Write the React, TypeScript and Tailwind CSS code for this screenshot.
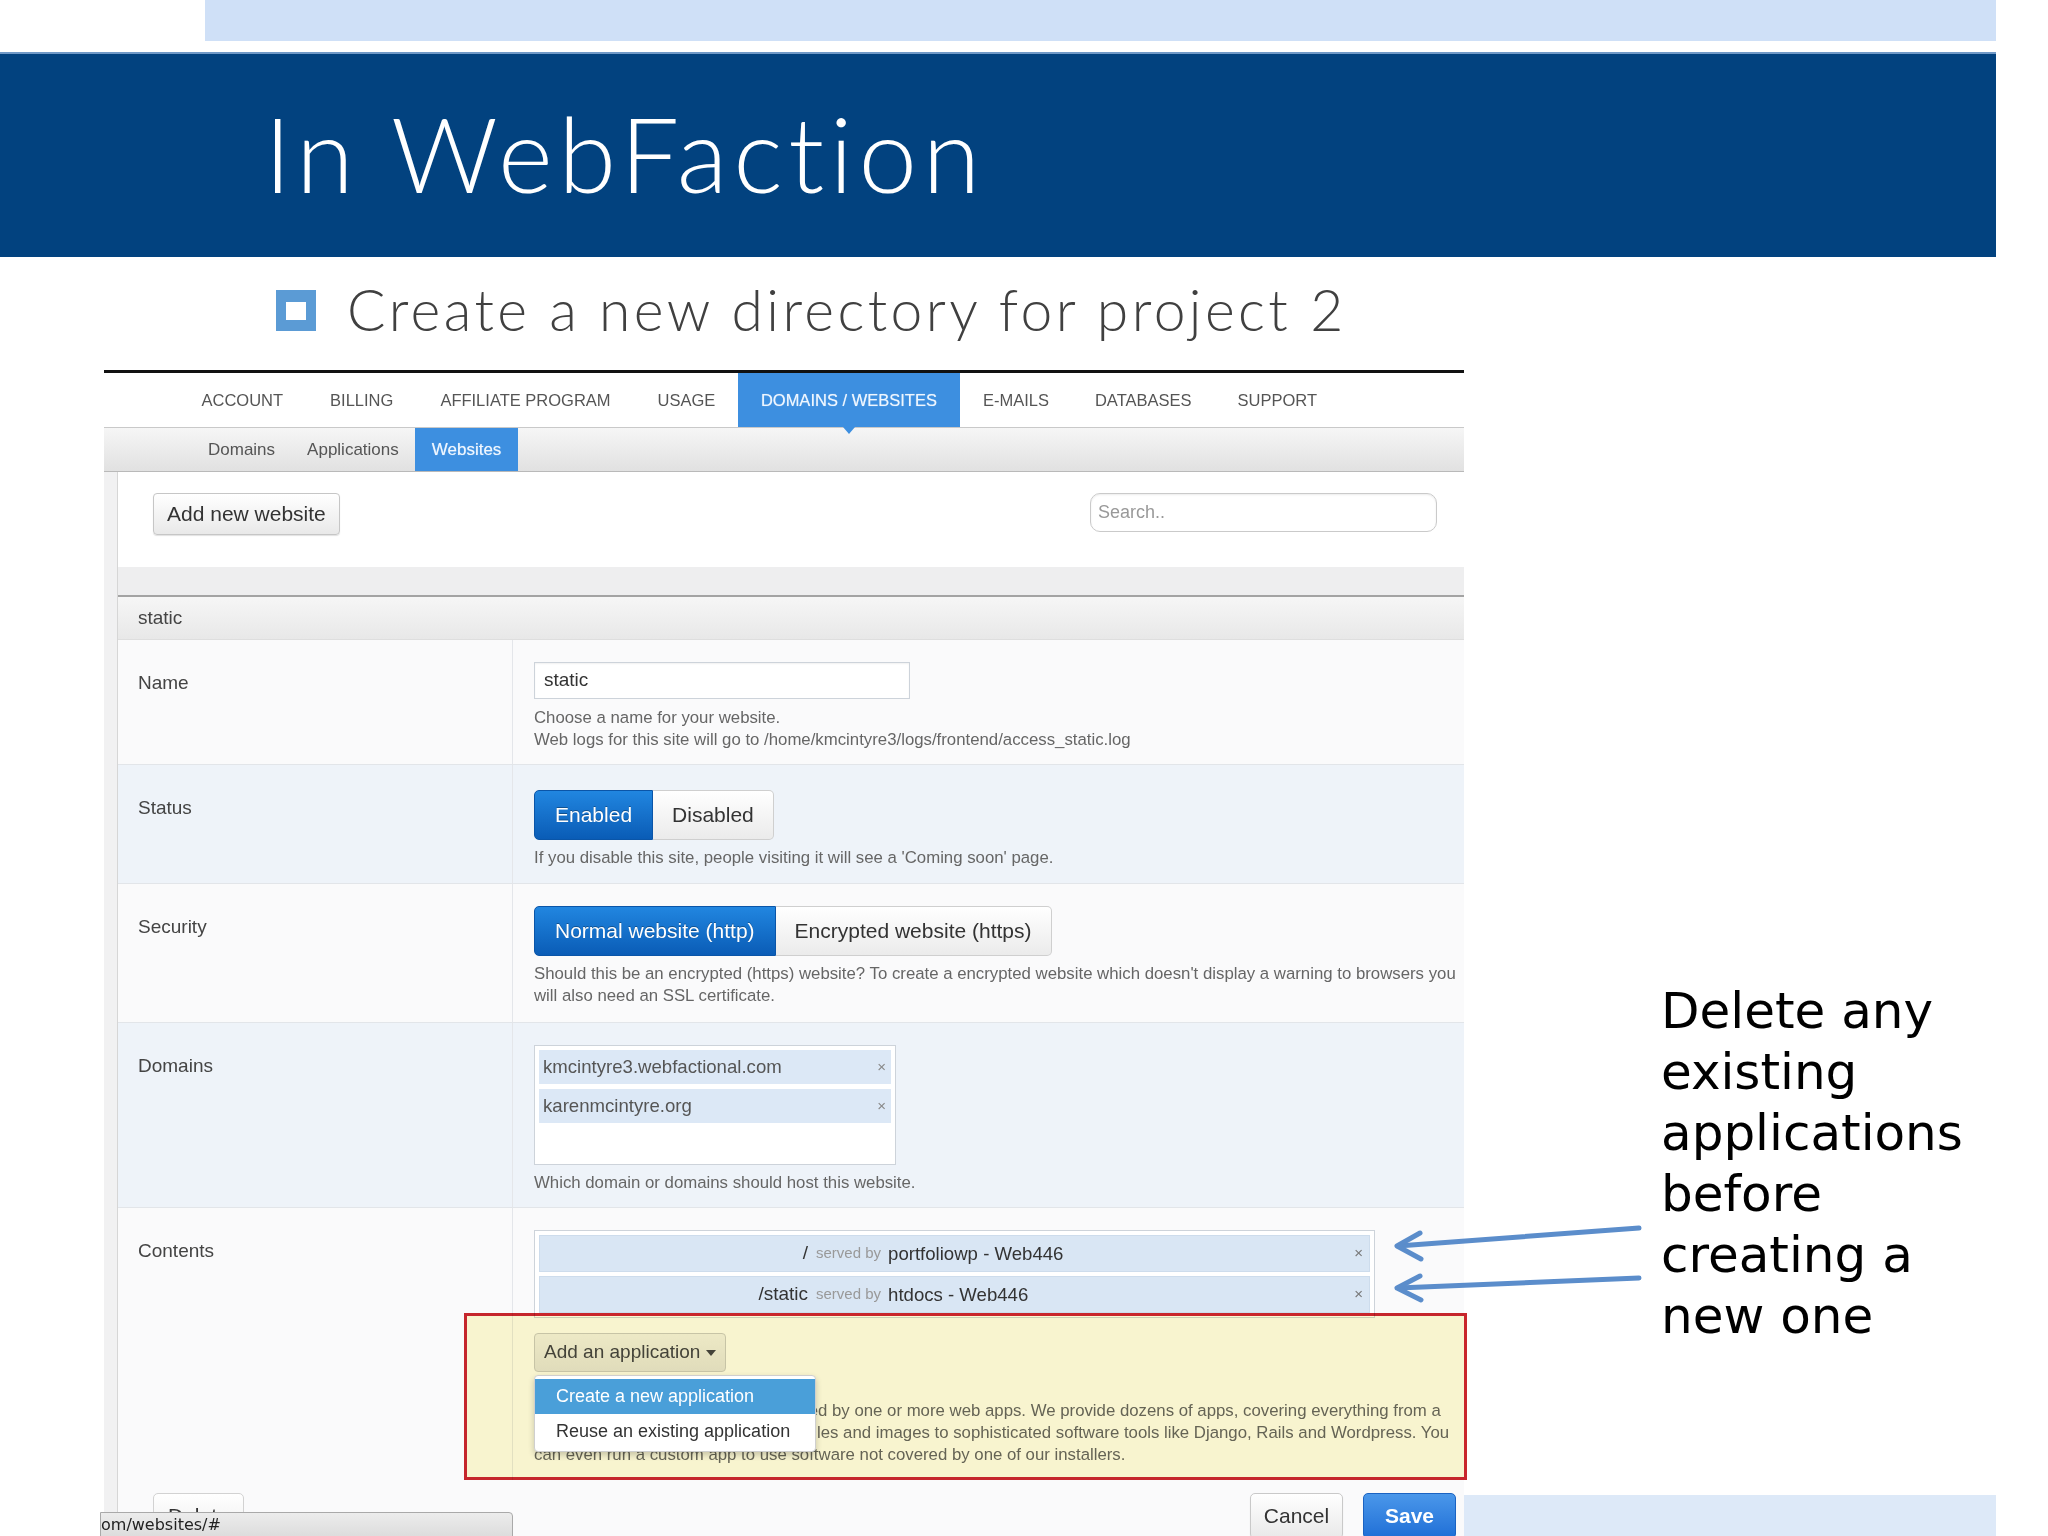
import React from "react"

const help = "text-[16.8px] leading-[22px] text-[#666] whitespace-nowrap"

function Row({ label, className, children }: { label: string; className: string; children: React.ReactNode }) {
  return (
    <div className={`flex border-b border-[#e2e5e9] ${className}`}>
      <div className="w-[395px] shrink-0 border-r border-[#e4e6ea] pl-[20px] pt-[32px] text-[19px] leading-[22px] text-[#444]">{label}</div>
      <div className="relative flex-1 pl-[21px] pt-[22px]">{children}</div>
    </div>
  )
}

function Toggle({ on, off }: { on: string; off: string }) {
  return (
    <div className="flex h-[50px] text-[21px]">
      <div className="flex items-center rounded-l-[5px] border border-[#0a55a8] bg-gradient-to-b from-[#2186e0] to-[#0a5cb6] px-[20px] text-white [text-shadow:0_-1px_0_rgba(0,0,0,0.3)]">
        {on}
      </div>
      <div className="flex items-center rounded-r-[5px] border border-l-0 border-[#cfcfcf] bg-gradient-to-b from-white to-[#ebebeb] px-[19px] text-[#333]">
        {off}
      </div>
    </div>
  )
}

function Tag({ text }: { text: string }) {
  return (
    <div className="flex h-[34px] items-center justify-between bg-[#dce8f6] pl-[4px] pr-[5px] text-[18.6px] text-[#555]">
      <span>{text}</span>
      <span className="text-[15px] text-[#888]">×</span>
    </div>
  )
}

function Served({ path, app }: { path: string; app: string }) {
  return (
    <div className="flex h-[37px] items-center border border-[#cddcec] bg-[#d9e6f4]">
      <span className="w-[268px] text-right text-[19px] text-[#333]">{path}</span>
      <span className="ml-[8px] text-[15px] text-[#999]">served by</span>
      <span className="ml-[7px] text-[18.6px] text-[#333]">{app}</span>
      <span className="ml-auto pr-[6px] text-[15px] text-[#777]">×</span>
    </div>
  )
}

export default function App() {
  return (
    <div className="relative h-[1536px] w-[2048px] overflow-hidden bg-white font-['Liberation_Sans',Arial,sans-serif]">
      <div className="ml-[205px] h-[41px] w-[1791px] bg-[#cfe0f7]" />
      <div className="mt-[11px] h-[205px] w-[1996px] border-t-2 border-[#7099c7] bg-[#02427f] pl-[264px] pt-[46px]">
        <h1 className="font-['Lato',sans-serif] text-[105px] font-light leading-none tracking-[5.5px] text-white">In WebFaction</h1>
      </div>

      <div className="mt-[24px] flex h-[56px] items-start">
        <div className="ml-[276px] mt-[9px] flex h-[41px] w-[40px] items-center justify-center bg-[#5b9bd5]">
          <div className="h-[18px] w-[20px] bg-white" />
        </div>
        <div className="ml-[31px] font-['Lato',sans-serif] text-[57px] font-light leading-none tracking-[3.4px] text-[#404040]">
          Create a new directory for project 2
        </div>
      </div>

      <div className="mt-[33px] flex h-[1166px]">
        {/* screenshot panel */}
        <div className="ml-[104px] flex h-full w-[1360px] flex-col overflow-hidden border-t-[3px] border-[#111]">
          <div className="flex h-[55px] shrink-0 border-b border-[#c9c9c9] bg-white pl-[74px] text-[16.5px] text-[#555]">
            {["ACCOUNT", "BILLING", "AFFILIATE PROGRAM", "USAGE"].map((t) => (
              <div key={t} className="flex items-center px-[23.5px]">{t}</div>
            ))}
            <div className="relative -ml-[1px] flex items-center bg-[#3d8fe0] px-[23px] text-[#eef6ff] [text-shadow:0_0_1px_rgba(255,255,255,0.6)]">
              DOMAINS / WEBSITES
              <div className="absolute left-1/2 top-full -ml-[6px] h-0 w-0 border-x-[6px] border-t-[7px] border-x-transparent border-t-[#3d8fe0]" />
            </div>
            {["E-MAILS", "DATABASES", "SUPPORT"].map((t) => (
              <div key={t} className="flex items-center px-[23px]">{t}</div>
            ))}
          </div>
          <div className="flex h-[44px] shrink-0 border-b border-[#b9b9b9] bg-gradient-to-b from-[#f6f6f6] to-[#e1e1e1] pl-[88px] text-[17px] text-[#555]">
            <div className="flex items-center px-[16px]">Domains</div>
            <div className="flex items-center px-[16px]">Applications</div>
            <div className="flex items-center bg-[#3d8fe0] px-[17px] text-[#eef6ff] [text-shadow:0_0_1px_rgba(255,255,255,0.6)]">Websites</div>
          </div>

          <div className="flex flex-1">
            <div className="w-[14px] shrink-0 border-r border-[#d6d6d6] bg-[#f1f1f2]" />
            <div className="flex flex-1 flex-col bg-[#fafafb]">
              <div className="flex h-[95px] shrink-0 items-start justify-between bg-white pl-[35px] pr-[27px] pt-[21px]">
                <div className="flex h-[42px] items-center rounded-[4px] border border-[#c6c6c6] bg-gradient-to-b from-white to-[#e9e9e9] px-[13px] text-[21px] text-[#333] shadow-[0_1px_1px_rgba(0,0,0,0.12)]">
                  Add new website
                </div>
                <div className="flex h-[39px] w-[347px] items-center rounded-[10px] border border-[#cacaca] bg-white pl-[7px] text-[18px] text-[#999] shadow-[inset_0_1px_2px_rgba(0,0,0,0.08)]">
                  Search..
                </div>
              </div>
              <div className="h-[28px] shrink-0 bg-[#eeeeef]" />
              <div className="flex h-[45px] shrink-0 items-center border-t-2 border-b border-t-[#a3a3a3] border-b-[#dedede] bg-gradient-to-b from-[#f6f6f6] to-[#e8e8e8] pl-[20px] text-[19px] text-[#444]">
                static
              </div>

              <Row label="Name" className="h-[125px] bg-[#fafafb]">
                <div className="flex h-[37px] w-[376px] items-center border border-[#cdd3da] bg-white pl-[9px] text-[19px] text-[#333] shadow-[inset_0_1px_2px_rgba(0,0,0,0.06)]">
                  static
                </div>
                <div className={`mt-[8px] ${help}`}>
                  Choose a name for your website.
                  <br />
                  Web logs for this site will go to /home/kmcintyre3/logs/frontend/access_static.log
                </div>
              </Row>

              <Row label="Status" className="h-[119px] bg-[#eef3f9]">
                <div className="pt-[3px]">
                  <Toggle on="Enabled" off="Disabled" />
                </div>
                <div className={`mt-[7px] ${help}`}>If you disable this site, people visiting it will see a 'Coming soon' page.</div>
              </Row>

              <Row label="Security" className="h-[139px] bg-[#fafafb]">
                <Toggle on="Normal website (http)" off="Encrypted website (https)" />
                <div className={`mt-[7px] ${help}`}>
                  Should this be an encrypted (https) website? To create a encrypted website which doesn't display a warning to browsers you
                  <br />
                  will also need an SSL certificate.
                </div>
              </Row>

              <Row label="Domains" className="h-[185px] bg-[#eef3f9]">
                <div className="flex h-[120px] w-[362px] flex-col gap-[5px] border border-[#cdd3da] bg-white p-[4px]">
                  <Tag text="kmcintyre3.webfactional.com" />
                  <Tag text="karenmcintyre.org" />
                </div>
                <div className={`mt-[7px] ${help}`}>Which domain or domains should host this website.</div>
              </Row>

              <Row label="Contents" className="h-[272px] border-b-0 bg-[#fafafb]">
                <div className="flex w-[841px] flex-col gap-[4px] border border-[#cdd3da] bg-white p-[4px]">
                  <Served path="/" app="portfoliowp - Web446" />
                  <Served path="/static" app="htdocs - Web446" />
                </div>
                <div className="relative mt-[15px] w-fit">
                  <div className="flex h-[39px] items-center gap-[6px] rounded-[4px] border border-[#c9c9c9] bg-gradient-to-b from-[#efefef] to-[#e2e2e2] px-[9px] text-[19px] text-[#444]">
                    Add an application
                    <svg width="10" height="6" viewBox="0 0 10 6">
                      <path d="M0 0h10L5 6z" fill="#444" />
                    </svg>
                  </div>
                  <div className="absolute left-0 top-[42px] z-10 w-[282px] rounded-[4px] border border-[#cfcfcf] bg-white py-[3px] text-[18px] shadow-[0_3px_6px_rgba(0,0,0,0.2)]">
                    <div className="flex h-[35px] items-center bg-[#4a9fd9] pl-[21px] text-white">Create a new application</div>
                    <div className="flex h-[34px] items-center pl-[21px] text-[#333]">Reuse an existing application</div>
                  </div>
                </div>
                <div className={`mt-[28px] ${help} text-[#555]`}>
                  <span className="inline-block w-[284px] overflow-hidden text-right align-bottom">Each website's content is serve</span>d by one or more web apps. We provide dozens of apps, covering everything from a
                  <br />
                  <span className="inline-block w-[283px] overflow-hidden text-right align-bottom">serving simple static fi</span>les and images to sophisticated software tools like Django, Rails and Wordpress. You
                  <br />
                  can even run a custom app to use software not covered by one of our installers.
                </div>
              </Row>

              <div className="flex flex-1 items-start justify-between pl-[35px] pr-[8px] pt-[13px] text-[21px]">
                <div className="flex h-[46px] items-center rounded-[5px] border border-[#d2d2d2] bg-gradient-to-b from-white to-[#ededed] px-[14px] text-[#333]">Delete</div>
                <div className="flex gap-[20px]">
                  <div className="flex h-[46px] w-[93px] items-center justify-center rounded-[5px] border border-[#c9c9c9] bg-gradient-to-b from-white to-[#e9e9e9] text-[#333] shadow-[0_1px_1px_rgba(0,0,0,0.12)]">
                    Cancel
                  </div>
                  <div className="flex h-[46px] w-[93px] items-center justify-center rounded-[5px] border border-[#1b63c2] bg-gradient-to-b from-[#4a97ea] to-[#1f6fd6] font-bold text-white">
                    Save
                  </div>
                </div>
              </div>
            </div>
          </div>
        </div>

        {/* annotation */}
        <div className="flex w-[532px] flex-col">
          <div className="ml-[197px] pt-[611px] font-['DejaVu_Sans',sans-serif] text-[50px] leading-[61px] text-black">
            Delete any
            <br />
            existing
            <br />
            applications
            <br />
            before
            <br />
            creating a
            <br />
            new one
          </div>
          <div className="mt-auto h-[41px] bg-[#dde9f8]" />
        </div>
      </div>

      {/* highlight box */}
      <div className="pointer-events-none absolute left-[464px] top-[1313px] h-[167px] w-[1003px] border-[3px] border-[#c9262c] bg-[#fdf9d3] mix-blend-multiply" />

      {/* browser status bar */}
      <div className="absolute left-[100px] top-[1512px] flex h-[26px] w-[413px] items-center rounded-tr-[4px] border border-[#a9a9a9] bg-gradient-to-b from-[#ececec] to-[#dcdcdc] font-['DejaVu_Sans',sans-serif] text-[16px] text-[#222]">
        om/websites/#
      </div>

      {/* arrows */}
      <svg className="pointer-events-none absolute left-0 top-0" width="2048" height="1536" viewBox="0 0 2048 1536">
        <g stroke="#5b8dcb" strokeWidth="5" strokeLinecap="round" strokeLinejoin="round" fill="none">
          <path d="M1639 1228 L1398 1246" />
          <path d="M1420 1233 L1397 1246 L1421 1259" />
          <path d="M1639 1278 L1398 1288" />
          <path d="M1420 1276 L1397 1288 L1421 1300" />
        </g>
      </svg>
    </div>
  )
}
